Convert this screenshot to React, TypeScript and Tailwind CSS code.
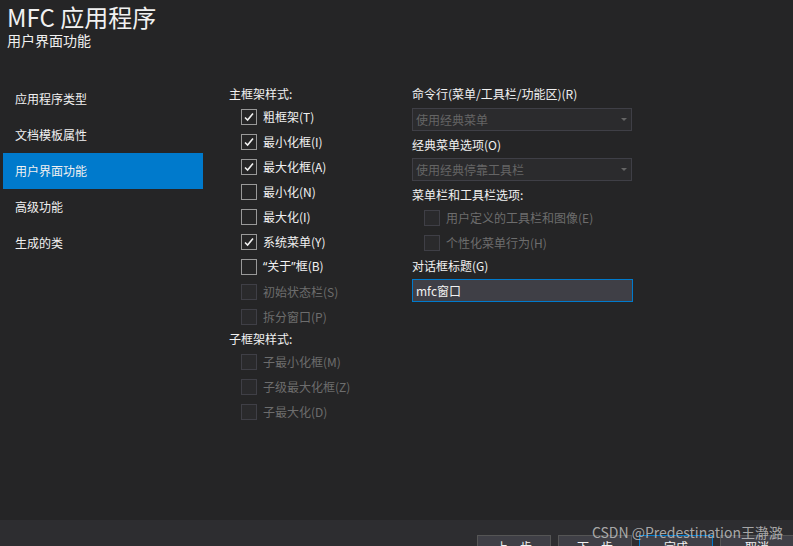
import React from 'react';

const FONT = '"Noto Sans CJK SC", "Noto Sans", sans-serif';

const navItems = ['应用程序类型', '文档模板属性', '用户界面功能', '高级功能', '生成的类'];

interface CheckRowProps {
    label: React.ReactNode;
    checked?: boolean;
    disabled?: boolean;
}

const CheckRow: React.FC<CheckRowProps> = ({ label, checked = false, disabled = false }) => (
    <div className="h-[25px] flex items-center pl-[12px]">
        <div
            className={
                disabled
                    ? 'w-[16px] h-[16px] border border-[#3f3f46] bg-[#2a2a2c]'
                    : 'w-[16px] h-[16px] border border-[#999999] bg-[#252526] flex items-center justify-center'
            }
        >
            {checked && (
                <svg width="12" height="12" viewBox="0 0 12 12">
                    <path d="M2 6.5 L4.6 9 L10 2.5" fill="none" stroke="#f1f1f1" strokeWidth="1.6" />
                </svg>
            )}
        </div>
        <span className={`ml-[6px] text-[12px] ${disabled ? 'text-[#6d6d6d]' : 'text-[#f1f1f1]'}`}>{label}</span>
    </div>
);

const Dropdown: React.FC<{ value: string }> = ({ value }) => (
    <div className="h-[23px] w-[220px] border border-[#3f3f46] bg-[#2b2b2d] flex items-center justify-between pl-[3px] pr-[4px]">
        <span className="text-[12px] text-[#656565]">{value}</span>
        <svg width="6" height="4" viewBox="0 0 6 4">
            <path d="M0 0 L6 0 L3 3 Z" fill="#656565" />
        </svg>
    </div>
);

export default function App() {
    return (
        <div
            className="w-[793px] h-[546px] overflow-hidden bg-[#252526] flex flex-col relative"
            style={{ fontFamily: FONT }}
        >
            <div className="flex-1 flex flex-col">
                {/* header */}
                <div className="pl-[7px] pt-[3px]">
                    <div className="text-[24px] leading-[28px] text-[#f1f1f1]">MFC 应用程序</div>
                    <div className="text-[14px] leading-[18px] text-[#f1f1f1]">用户界面功能</div>
                </div>

                <div className="flex">
                    {/* sidebar */}
                    <div className="ml-[3px] w-[200px] mt-[32px] flex flex-col">
                        {navItems.map((item, i) => (
                            <div
                                key={item}
                                className={`h-[36px] flex items-center pl-[12px] text-[12px] text-[#f1f1f1] ${
                                    i === 2 ? 'bg-[#007acc]' : ''
                                }`}
                            >
                                {item}
                            </div>
                        ))}
                    </div>

                    {/* main frame styles */}
                    <div className="ml-[26px] w-[183px] pt-[35px] flex flex-col">
                        <div className="h-[20px] flex items-center text-[12px] text-[#f1f1f1]">主框架样式:</div>
                        <CheckRow label="粗框架(T)" checked />
                        <CheckRow label="最小化框(I)" checked />
                        <CheckRow label="最大化框(A)" checked />
                        <CheckRow label="最小化(N)" />
                        <CheckRow label="最大化(I)" />
                        <CheckRow label="系统菜单(Y)" checked />
                        <CheckRow
                            label={
                                <>
                                    <span className="font-['Noto_Sans']">“</span>关于
                                    <span className="font-['Noto_Sans']">”</span>框(B)
                                </>
                            }
                        />
                        <CheckRow label="初始状态栏(S)" disabled />
                        <CheckRow label="拆分窗口(P)" disabled />
                        <div className="h-[20px] flex items-center text-[12px] text-[#f1f1f1]">子框架样式:</div>
                        <CheckRow label="子最小化框(M)" disabled />
                        <CheckRow label="子级最大化框(Z)" disabled />
                        <CheckRow label="子最大化(D)" disabled />
                    </div>

                    {/* right column */}
                    <div className="w-[222px] pt-[35px] flex flex-col">
                        <div className="h-[20px] flex items-center text-[12px] text-[#f1f1f1]">命令行(菜单/工具栏/功能区)(R)</div>
                        <div className="mt-[4px]">
                            <Dropdown value="使用经典菜单" />
                        </div>
                        <div className="mt-[4px] h-[20px] flex items-center text-[12px] text-[#f1f1f1]">经典菜单选项(O)</div>
                        <div className="mt-[3px]">
                            <Dropdown value="使用经典停靠工具栏" />
                        </div>
                        <div className="mt-[4px] h-[20px] flex items-center text-[12px] text-[#f1f1f1]">菜单栏和工具栏选项:</div>
                        <CheckRow label="用户定义的工具栏和图像(E)" disabled />
                        <CheckRow label="个性化菜单行为(H)" disabled />
                        <div className="mt-[1px] h-[20px] flex items-center text-[12px] text-[#f1f1f1]">对话框标题(G)</div>
                        <div className="mt-[3px] h-[23px] w-[221px] border border-[#007acc] bg-[#3f3f46] flex items-center pl-[3px] text-[12px] text-[#f1f1f1]">
                            mfc窗口
                        </div>
                    </div>
                </div>
            </div>

            {/* footer */}
            <div className="h-[26px] bg-[#2d2d30] flex gap-[7px] pl-[477px] pt-[15px] shrink-0">
                {['上一步', '下一步', '完成', '取消'].map((b) => (
                    <div
                        key={b}
                        className={`shrink-0 w-[74px] h-[23px] border ${
                            b === '完成' ? 'border-[#007acc]' : 'border-[#555555]'
                        } bg-[#3f3f46] flex items-center justify-center text-[12px] text-[#f1f1f1]`}
                    >
                        {b}
                    </div>
                ))}
            </div>

            {/* watermark */}
            <div className="absolute right-[10px] bottom-[6px] text-[14px] leading-[16px] text-[#c8c8c8]/80 pointer-events-none">
                CSDN @Predestination王瀞潞
            </div>
        </div>
    );
}
